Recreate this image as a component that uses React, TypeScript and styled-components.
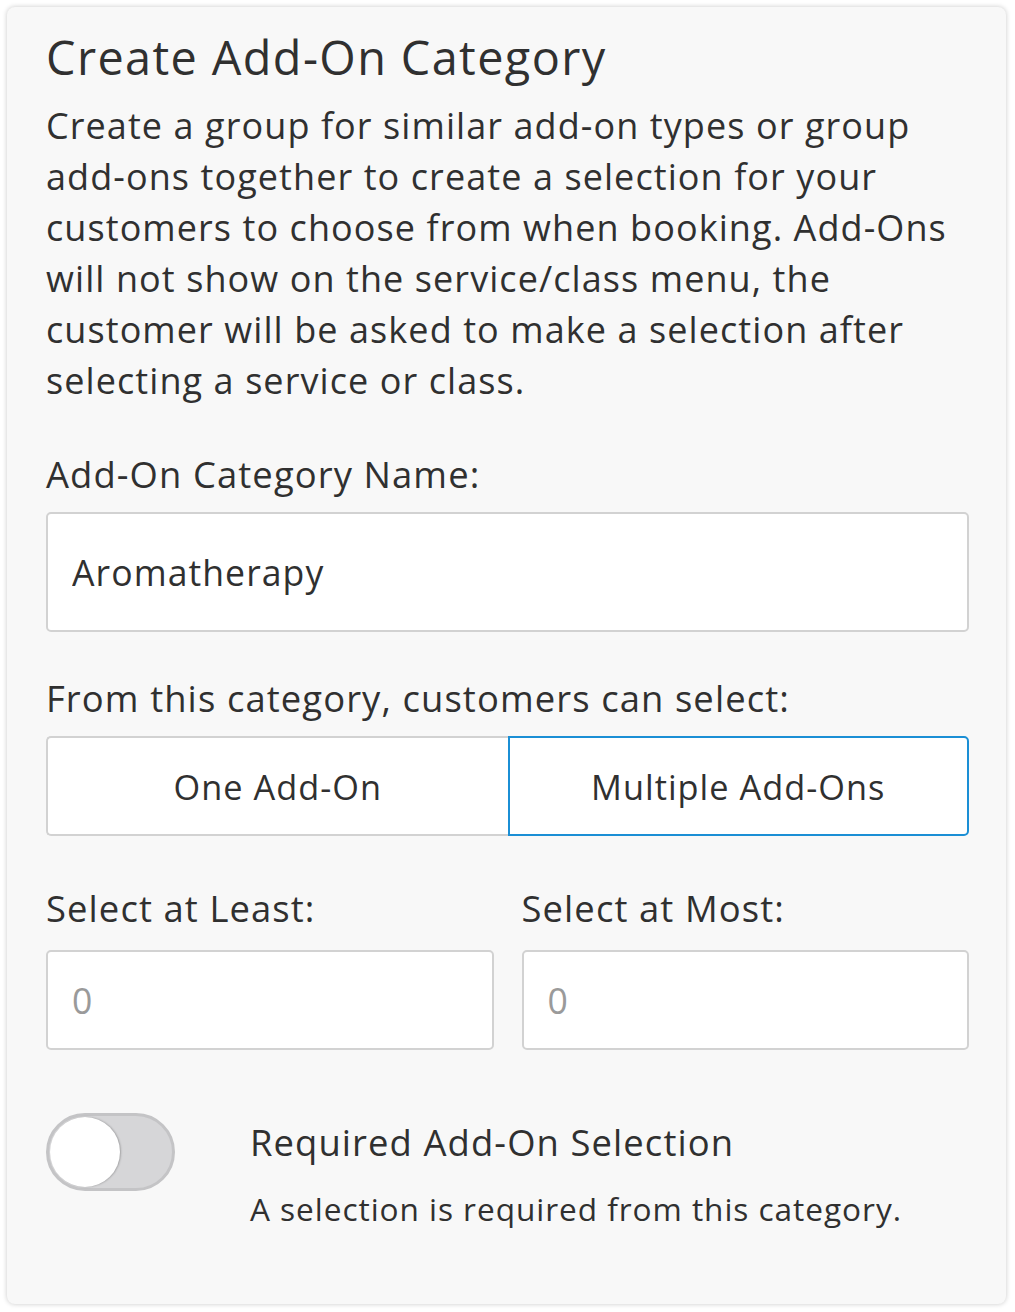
import React, { useState } from "react";
import styled, { createGlobalStyle } from "styled-components";

const GlobalStyle = createGlobalStyle`
  html, body {
    margin: 0;
    padding: 0;
    background: #ffffff;
  }
  body {
    font-family: "Open Sans", "Liberation Sans", sans-serif;
    color: #303030;
  }
  * {
    box-sizing: border-box;
  }
`;

const Page = styled.div`
  padding: 7px 9px 8px 7px;
`;

const Panel = styled.section`
  background: #f8f8f8;
  border-radius: 8px;
  box-shadow: 0 0 5px rgba(0, 0, 0, 0.22);
  min-height: 1297px;
  padding: 22px 37px 40px 39px;
  display: flex;
  flex-direction: column;
`;

const Title = styled.h1`
  margin: 0;
  font-size: 46.8px;
  font-weight: 400;
  line-height: 56px;
  letter-spacing: 0.03em;
`;

const Intro = styled.p`
  margin: 15px 0 0;
  font-size: 36px;
  line-height: 51px;
  letter-spacing: 0.03em;
`;

const Label = styled.label<{ $gap?: number }>`
  display: block;
  font-size: 36.4px;
  line-height: 44px;
  letter-spacing: 0.03em;
  margin-bottom: ${(p) => p.$gap ?? 16}px;
`;

const Field = styled.div<{ $top: number }>`
  margin-top: ${(p) => p.$top}px;
`;

const TextInput = styled.input<{ $h: number }>`
  width: 100%;
  height: ${(p) => p.$h}px;
  border: 2px solid #d2d2d2;
  border-radius: 5px;
  background: #fff;
  padding: 0 24px;
  font-family: inherit;
  font-size: 35.6px;
  letter-spacing: 0.03em;
  color: #303030;
  outline: none;

  &::placeholder {
    color: #9a9a9a;
  }
`;

const Segmented = styled.div`
  display: grid;
  grid-template-columns: 1fr 1fr;
  height: 100px;
`;

const Segment = styled.button<{ $active: boolean; $side: "left" | "right" }>`
  background: #fff;
  font-family: inherit;
  font-size: 34.3px;
  letter-spacing: 0.03em;
  color: #303030;
  cursor: pointer;
  border: 2px solid ${(p) => (p.$active ? "#1b8fd5" : "#d2d2d2")};
  border-radius: ${(p) => (p.$side === "left" ? "5px 0 0 5px" : "0 5px 5px 0")};
  ${(p) => (p.$side === "left" && !p.$active ? "border-right: none;" : "")}
`;

const Columns = styled.div`
  display: grid;
  grid-template-columns: 1fr 1fr;
  column-gap: 28px;
`;

const ToggleRow = styled.div`
  display: flex;
  align-items: flex-start;
  gap: 75px;
  margin-top: 63px;
`;

const Switch = styled.button<{ $on: boolean }>`
  position: relative;
  flex: none;
  width: 129px;
  height: 78px;
  border-radius: 39px;
  border: 3px solid #c4c4c6;
  background: ${(p) => (p.$on ? "#1b8fd5" : "#d6d6d8")};
  padding: 0;
  cursor: pointer;
`;

const Knob = styled.span<{ $on: boolean }>`
  position: absolute;
  top: 1px;
  left: ${(p) => (p.$on ? "52px" : "1px")};
  width: 70px;
  height: 70px;
  border-radius: 50%;
  background: #fff;
  box-shadow: 1px 0 2px rgba(0, 0, 0, 0.25);
`;

const ToggleText = styled.div`
  padding-top: 7px;
`;

const ToggleTitle = styled.div`
  font-size: 36.4px;
  line-height: 44px;
  letter-spacing: 0.03em;
`;

const ToggleHint = styled.div`
  margin-top: 25px;
  font-size: 31.6px;
  line-height: 40px;
  letter-spacing: 0.03em;
`;

export default function App() {
  const [mode, setMode] = useState<"one" | "multiple">("multiple");
  const [required, setRequired] = useState(false);

  return (
    <Page>
      <GlobalStyle />
      <Panel>
        <Title>Create Add-On Category</Title>
        <Intro>
          Create a group for similar add-on types or group add-ons together to create a
          selection for your customers to choose from when booking. Add-Ons will not show
          on the service/class menu, the customer will be asked to make a selection after
          selecting a service or class.
        </Intro>

        <Field $top={46}>
          <Label>Add-On Category Name:</Label>
          <TextInput $h={120} defaultValue="Aromatherapy" />
        </Field>

        <Field $top={44}>
          <Label>From this category, customers can select:</Label>
          <Segmented>
            <Segment $side="left" $active={mode === "one"} onClick={() => setMode("one")}>
              One Add-On
            </Segment>
            <Segment
              $side="right"
              $active={mode === "multiple"}
              onClick={() => setMode("multiple")}
            >
              Multiple Add-Ons
            </Segment>
          </Segmented>
        </Field>

        <Field $top={50}>
          <Columns>
            <div>
              <Label $gap={20}>Select at Least:</Label>
              <TextInput $h={100} placeholder="0" />
            </div>
            <div>
              <Label $gap={20}>Select at Most:</Label>
              <TextInput $h={100} placeholder="0" />
            </div>
          </Columns>
        </Field>

        <ToggleRow>
          <Switch $on={required} onClick={() => setRequired(!required)} aria-pressed={required}>
            <Knob $on={required} />
          </Switch>
          <ToggleText>
            <ToggleTitle>Required Add-On Selection</ToggleTitle>
            <ToggleHint>A selection is required from this category.</ToggleHint>
          </ToggleText>
        </ToggleRow>
      </Panel>
    </Page>
  );
}
